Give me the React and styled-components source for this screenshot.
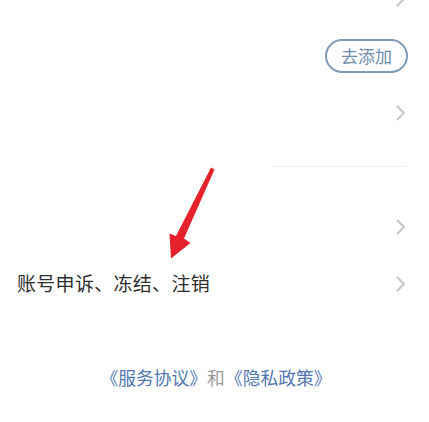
import styled, { createGlobalStyle } from 'styled-components';

const GlobalStyle = createGlobalStyle`
  html, body {
    margin: 0;
    padding: 0;
    background: #ffffff;
  }
  body {
    font-family: "Noto Sans CJK SC", "Noto Sans", sans-serif;
    overflow: hidden;
  }
`;

const rows = [
  { id: 'top', arrow: true },
  { id: 'add', button: '去添加' },
  { id: 'mid', arrow: true },
  { id: 'gap', rule: true },
  { id: 'more', arrow: true },
  { id: 'account', label: '账号申诉、冻结、注销', arrow: true },
];

const Chevron = () => (
  <ChevronSvg viewBox="0 0 10 16" width="10" height="16">
    <polyline points="1.5,1.5 8,8 1.5,14.5" fill="none" stroke="#c6c6c6" strokeWidth="2" strokeLinecap="round" strokeLinejoin="round" />
  </ChevronSvg>
);

const App = () => {
  return (
    <>
      <GlobalStyle />
      <Page>
        <List>
          {rows.map((row) => (
            <Row key={row.id}>
              {row.label && <Label>{row.label}</Label>}
              {row.button && <AddButton>{row.button}</AddButton>}
              {row.rule && <Rule />}
              {row.arrow && <Chevron />}
            </Row>
          ))}
        </List>
        <Footer>
          <Link>《服务协议》</Link>
          <And>和</And>
          <Link>《隐私政策》</Link>
        </Footer>
        <Annotation viewBox="0 0 429 422" width="429" height="422">
          <polygon
            points="211,167.5 214.5,169.5 184,238.5 190.5,243 171,258.5 169.5,233.5 176,236"
            fill="#e5222b"
          />
        </Annotation>
      </Page>
    </>
  );
};

export default App;

const Page = styled.div`
  position: relative;
  width: 429px;
  height: 422px;
  overflow: hidden;
  background: #ffffff;
`;

const List = styled.div`
  display: flex;
  flex-direction: column;
  margin-top: -30px;
`;

const Row = styled.div`
  display: flex;
  align-items: center;
  justify-content: flex-end;
  height: 57px;
  padding: 0 23px 0 17px;
`;

const Label = styled.span`
  flex: 1;
  font-size: 19px;
  letter-spacing: 0.3px;
  color: #2e2e2e;
  line-height: 24px;
  margin-top: -2px;
`;

const ChevronSvg = styled.svg`
  display: block;
  flex-shrink: 0;
`;

const AddButton = styled.button`
  width: 83px;
  height: 34px;
  margin-right: -2px;
  border: 2px solid #7f9cb8;
  border-radius: 17px;
  background: #ffffff;
  color: #6d8cab;
  font-family: "Noto Sans CJK SC", sans-serif;
  font-size: 17px;
  line-height: 1;
  padding: 0;
`;

const Rule = styled.div`
  width: 136px;
  height: 1px;
  margin-right: -1px;
  margin-bottom: 6px;
  background: #ececec;
`;

const Footer = styled.div`
  display: flex;
  justify-content: center;
  padding-top: 53px;
  padding-left: 3px;
  font-size: 17.8px;
  line-height: 24px;
`;

const Link = styled.span`
  color: #5277b2;
`;

const And = styled.span`
  color: #9a9a9a;
`;

const Annotation = styled.svg`
  position: absolute;
  left: 0;
  top: 0;
  pointer-events: none;
`;
